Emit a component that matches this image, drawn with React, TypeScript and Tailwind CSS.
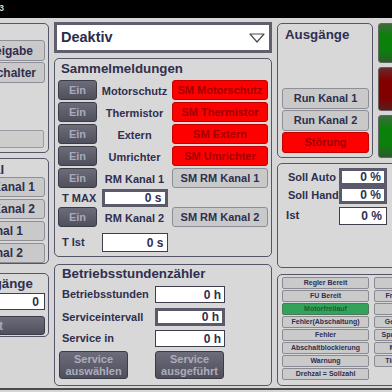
import React from 'react';

// HMI panel: Sammelmeldungen / Betriebsstunden / Ausgänge

const Panel = ({ className = '', children }: { className?: string; children?: React.ReactNode }) => (
  <div className={`rounded-[5px] border border-[#55556a] bg-[#d8d8d8] ${className}`}>{children}</div>
);

const GrayBtn = ({ label, className = '' }: { label: string; className?: string }) => (
  <div
    className={`flex items-center justify-center rounded-[3px] border border-[#8e8e98] bg-[#c9c9c9] text-[11px] font-bold text-[#2f2f4f] ${className}`}
  >
    {label}
  </div>
);

const RedBtn = ({ label, className = '' }: { label: string; className?: string }) => (
  <div
    className={`flex items-center justify-center rounded-[3px] border border-[#c40000] bg-[#ff0000] text-[11px] font-bold text-[#a20000] ${className}`}
  >
    {label}
  </div>
);

const EinBtn = () => (
  <div className="flex h-[20px] w-[39px] shrink-0 items-center justify-center rounded-[3px] border border-[#3c3c48] bg-gradient-to-b from-[#6c6c7a] to-[#50505d] text-[11px] font-bold text-[#a9a9bb]">
    Ein
  </div>
);

const Field = ({ value, thick = false, className = '' }: { value: string; thick?: boolean; className?: string }) => (
  <div
    className={`flex shrink-0 items-center justify-end bg-white pr-[3px] text-[12px] font-bold text-[#2f2f4f] ${
      thick ? 'border-[3px] border-[#5a5a6a]' : 'border border-[#3e3e4c]'
    } ${className}`}
  >
    {value}
  </div>
);

const smRows = [
  { label: 'Motorschutz', sm: 'SM Motorschutz' },
  { label: 'Thermistor', sm: 'SM Thermistor' },
  { label: 'Extern', sm: 'SM Extern' },
  { label: 'Umrichter', sm: 'SM Umrichter' },
];

const status: { text: string; green?: boolean }[][] = [
  [{ text: 'Regler Bereit' }, { text: 'Auto' }],
  [{ text: 'FU Bereit' }, { text: 'Freigabe Umrichter' }],
  [{ text: 'Motorfreilauf', green: true }, { text: 'Hand' }],
  [{ text: 'Fehler(Abschaltung)' }, { text: 'Gesteuerter Betrieb' }],
  [{ text: 'Fehler' }, { text: 'Spannung vorhanden' }],
  [{ text: 'Abschaltblockierung' }, { text: 'Motor Übertemp.' }],
  [{ text: 'Warnung' }, { text: 'Timeout Rückmeld.' }],
  [{ text: 'Drehzal = Sollzahl' }],
];

const title = 'text-[13.3px] font-bold leading-[15px] text-[#2f2f4f] whitespace-nowrap';

export default function App() {
  return (
    <div className="flex h-[392px] w-[392px] flex-col overflow-hidden bg-[#d6d6d6] font-['Liberation_Sans',Arial,sans-serif] text-[#2f2f4f]">
      {/* Header */}
      <div className="flex h-[18px] shrink-0 items-center overflow-hidden bg-black">
        <span className="ml-[-17px] whitespace-nowrap text-[9px] font-bold text-[#d0d0d0]">V 1.3</span>
      </div>

      <div className="flex h-[370px] shrink-0 gap-[5px]">
        {/* Left column (cut off) */}
        <div className="ml-[-40px] flex w-[89px] shrink-0 flex-col pt-[5px]">
          <Panel className="h-[130px] pl-[10px] pr-[3px] pt-[16px]">
            <div className="flex h-[21px] items-center justify-end rounded-[3px] border border-[#8e8e98] bg-[#c9c9c9] pr-[11px] text-[12px] font-bold">
              Freigabe
            </div>
            <div className="mt-[1px] flex h-[21px] items-center justify-end rounded-[3px] border border-[#8e8e98] bg-[#c9c9c9] pr-[8px] text-[12px] font-bold">
              Schalter
            </div>
            <div className="mr-[1px] mt-[47px] h-[18px] rounded-[2px] border border-[#9a9aa2] bg-[#cdcdcd]" />
          </Panel>

          <Panel className="mt-[5px] h-[106px] pl-[10px] pr-[3px]">
            <div className={`${title} -ml-[3px] pt-[3px]`}>Kanal</div>
            <div className="flex flex-col gap-[2px]">
              {['Kanal 1', 'Kanal 2'].map((t) => (
                <div
                  key={t}
                  className="flex h-[20px] items-center justify-end rounded-[3px] border border-[#8e8e98] bg-[#c9c9c9] pr-[9px] text-[12px] font-bold"
                >
                  {t}
                </div>
              ))}
              {['Kanal 1', 'Kanal 2'].map((t) => (
                <div
                  key={t + 'b'}
                  className="flex h-[20px] items-center justify-end rounded-[3px] border border-[#8e8e98] bg-[#c9c9c9] pr-[21px] text-[12px] font-bold"
                >
                  {t}
                </div>
              ))}
            </div>
          </Panel>

          <Panel className="mt-[9px] h-[64px] pl-[10px] pr-[3px]">
            <div className={`${title} ml-[2px] pt-[2px]`}>Eingänge</div>
            <Field value="0" className="mt-[2px] h-[17px] pr-[5px]" />
            <div className="mt-[6px] flex h-[19px] items-center justify-end rounded-[3px] border border-[#3c3c48] bg-gradient-to-b from-[#6c6c7a] to-[#50505d] pr-[41px] text-[12px] font-bold text-[#a9a9bb]">
              Reset
            </div>
          </Panel>
        </div>

        {/* Middle column */}
        <div className="flex w-[218px] shrink-0 flex-col pt-[4px]">
          <div className="flex h-[31px] items-center justify-between border-[3px] border-[#5f5f6d] bg-white pl-[4px] pr-[4px]">
            <span className="text-[14.5px] font-bold text-[#2b2b4b]">Deaktiv</span>
            <svg width="16" height="10" viewBox="0 0 16 10">
              <path d="M1 1 L15 1 L8 9 Z" fill="none" stroke="#4a4a55" strokeWidth="1.2" strokeLinejoin="round" />
            </svg>
          </div>

          <Panel className="mt-[5px] h-[199px] px-[3px]">
            <div className={`${title} pl-[3px] pt-[2px]`}>Sammelmeldungen</div>
            <div className="mt-[4px] flex flex-col gap-[2px]">
              {smRows.map((r) => (
                <div key={r.label} className="flex h-[20px]">
                  <EinBtn />
                  <div className="flex w-[75px] items-center justify-center pt-[2px] text-[11px] font-bold">{r.label}</div>
                  <RedBtn label={r.sm} className="w-[96px]" />
                </div>
              ))}
              <div className="flex h-[20px]">
                <EinBtn />
                <div className="flex w-[75px] items-center justify-center pt-[2px] text-[11px] font-bold">RM Kanal 1</div>
                <GrayBtn label="SM RM Kanal 1" className="w-[96px]" />
              </div>
            </div>
            <div className="mt-[1px] flex h-[18px]">
              <div className="flex w-[39px] items-center whitespace-nowrap pl-[4px] text-[11px] font-bold">T MAX</div>
              <div className="flex w-[75px] justify-center">
                <Field value="0 s" thick className="h-[18px] w-[66px]" />
              </div>
            </div>
            <div className="flex h-[20px]">
              <EinBtn />
              <div className="flex w-[75px] items-center justify-center pt-[2px] text-[11px] font-bold">RM Kanal 2</div>
              <GrayBtn label="SM RM Kanal 2" className="w-[96px]" />
            </div>
            <div className="mt-[6px] flex h-[19px]">
              <div className="flex w-[39px] items-center pl-[4px] text-[11px] font-bold">T Ist</div>
              <div className="flex w-[75px] justify-center">
                <Field value="0 s" className="h-[19px] w-[66px]" />
              </div>
            </div>
          </Panel>

          <Panel className="mt-[7px] h-[122px] pl-[4px]">
            <div className={`${title} pl-[3px] pt-[1px]`}>Betriebsstundenzähler</div>
            <div className="mt-[5px] flex h-[17px] items-center">
              <span className="w-[96px] pl-[3px] text-[11px] font-bold">Betriebsstunden</span>
              <Field value="0 h" className="h-[17px] w-[70px]" />
            </div>
            <div className="mt-[5px] flex h-[18px] items-center">
              <span className="w-[96px] pl-[3px] text-[11px] font-bold">Serviceintervall</span>
              <Field value="0 h" thick className="h-[18px] w-[70px]" />
            </div>
            <div className="mt-[4px] flex h-[17px] items-center">
              <span className="w-[96px] pl-[3px] text-[11px] font-bold">Service in</span>
              <Field value="0 h" className="h-[17px] w-[70px]" />
            </div>
            <div className="mt-[4px] flex gap-[27px]">
              {[
                ['Service', 'auswählen'],
                ['Service', 'ausgeführt'],
              ].map(([a, b]) => (
                <div
                  key={b}
                  className="flex h-[28px] w-[69px] flex-col items-center justify-center rounded-[3px] border border-[#3c3c48] bg-gradient-to-b from-[#6c6c7a] to-[#50505d] text-[11px] font-bold leading-[12px] text-[#acacbe]"
                >
                  <span>{a}</span>
                  <span>{b}</span>
                </div>
              ))}
            </div>
          </Panel>
        </div>

        {/* Right column */}
        <div className="flex w-[140px] shrink-0 flex-col pt-[5px]">
          <div className="flex h-[135px]">
            <Panel className="flex h-full w-[96px] shrink-0 flex-col pb-[4px] pl-[4px] pr-[3px]">
              <div className={`${title} pl-[3px] pt-[3px]`}>Ausgänge</div>
              <div className="mt-auto flex flex-col gap-[1px]">
                <GrayBtn label="Run Kanal 1" className="h-[21px]" />
                <GrayBtn label="Run Kanal 2" className="h-[21px]" />
                <RedBtn label="Störung" className="h-[21px]" />
              </div>
            </Panel>
            <div className="ml-[5px] flex w-[40px] shrink-0 flex-col gap-[4px]">
              <div className="h-[40px] rounded-[3px] border border-[#5d6a5d] bg-[linear-gradient(180deg,#3e6a3e_0%,#0b800b_30%,#0b800b_70%,#2c5a2c_100%)]" />
              <div className="h-[44px] rounded-[3px] border border-[#6a5d5d] bg-[linear-gradient(180deg,#6a2a2a_0%,#820000_30%,#820000_70%,#5a1c1c_100%)]" />
              <div className="h-[43px] rounded-[3px] border border-[#5d6a5d] bg-[linear-gradient(180deg,#3e6a3e_0%,#0b800b_30%,#0b800b_70%,#2c5a2c_100%)]" />
            </div>
          </div>

          <Panel className="mt-[5px] h-[105px] w-[130px] pt-[4px]">
            <div className="flex h-[18px] items-center">
              <span className="w-[61px] shrink-0 whitespace-nowrap pl-[10px] text-[11px] font-bold">Soll Auto</span>
              <Field value="0 %" thick className="h-[18px] w-[48px]" />
            </div>
            <div className="flex h-[18px] items-center">
              <span className="w-[61px] shrink-0 whitespace-nowrap pl-[10px] text-[11px] font-bold">Soll Hand</span>
              <Field value="0 %" thick className="h-[18px] w-[48px]" />
            </div>
            <div className="mt-[3px] flex h-[18px] items-center">
              <span className="w-[61px] shrink-0 pl-[8px] text-[11.5px] font-bold">Ist</span>
              <Field value="0 %" className="h-[18px] w-[48px] pr-[4px]" />
            </div>
          </Panel>

          <Panel className="mt-[6px] h-[112px] w-[130px] pl-[4px] pt-[2px]">
            <div className="grid grid-cols-[87px_87px] gap-x-[5px] gap-y-[1px]">
              {status.flatMap((row, i) =>
                [0, 1].map((c) => {
                  const s = row[c];
                  if (!s) return <div key={`${i}-${c}`} className="h-[12px]" />;
                  return (
                    <div
                      key={`${i}-${c}`}
                      className={`flex h-[12px] items-center justify-center overflow-hidden whitespace-nowrap rounded-[2px] border text-[7px] font-bold ${
                        s.green
                          ? 'border-[#4a7a5a] bg-[#33a35c] text-[#1b5e33]'
                          : 'border-[#8a8a94] bg-[#cacaca] text-[#2f2f4f]'
                      }`}
                    >
                      {s.text}
                    </div>
                  );
                })
              )}
            </div>
          </Panel>
        </div>
      </div>

      <div className="h-[2px] shrink-0 bg-[#4a4a4a]" />
    </div>
  );
}
